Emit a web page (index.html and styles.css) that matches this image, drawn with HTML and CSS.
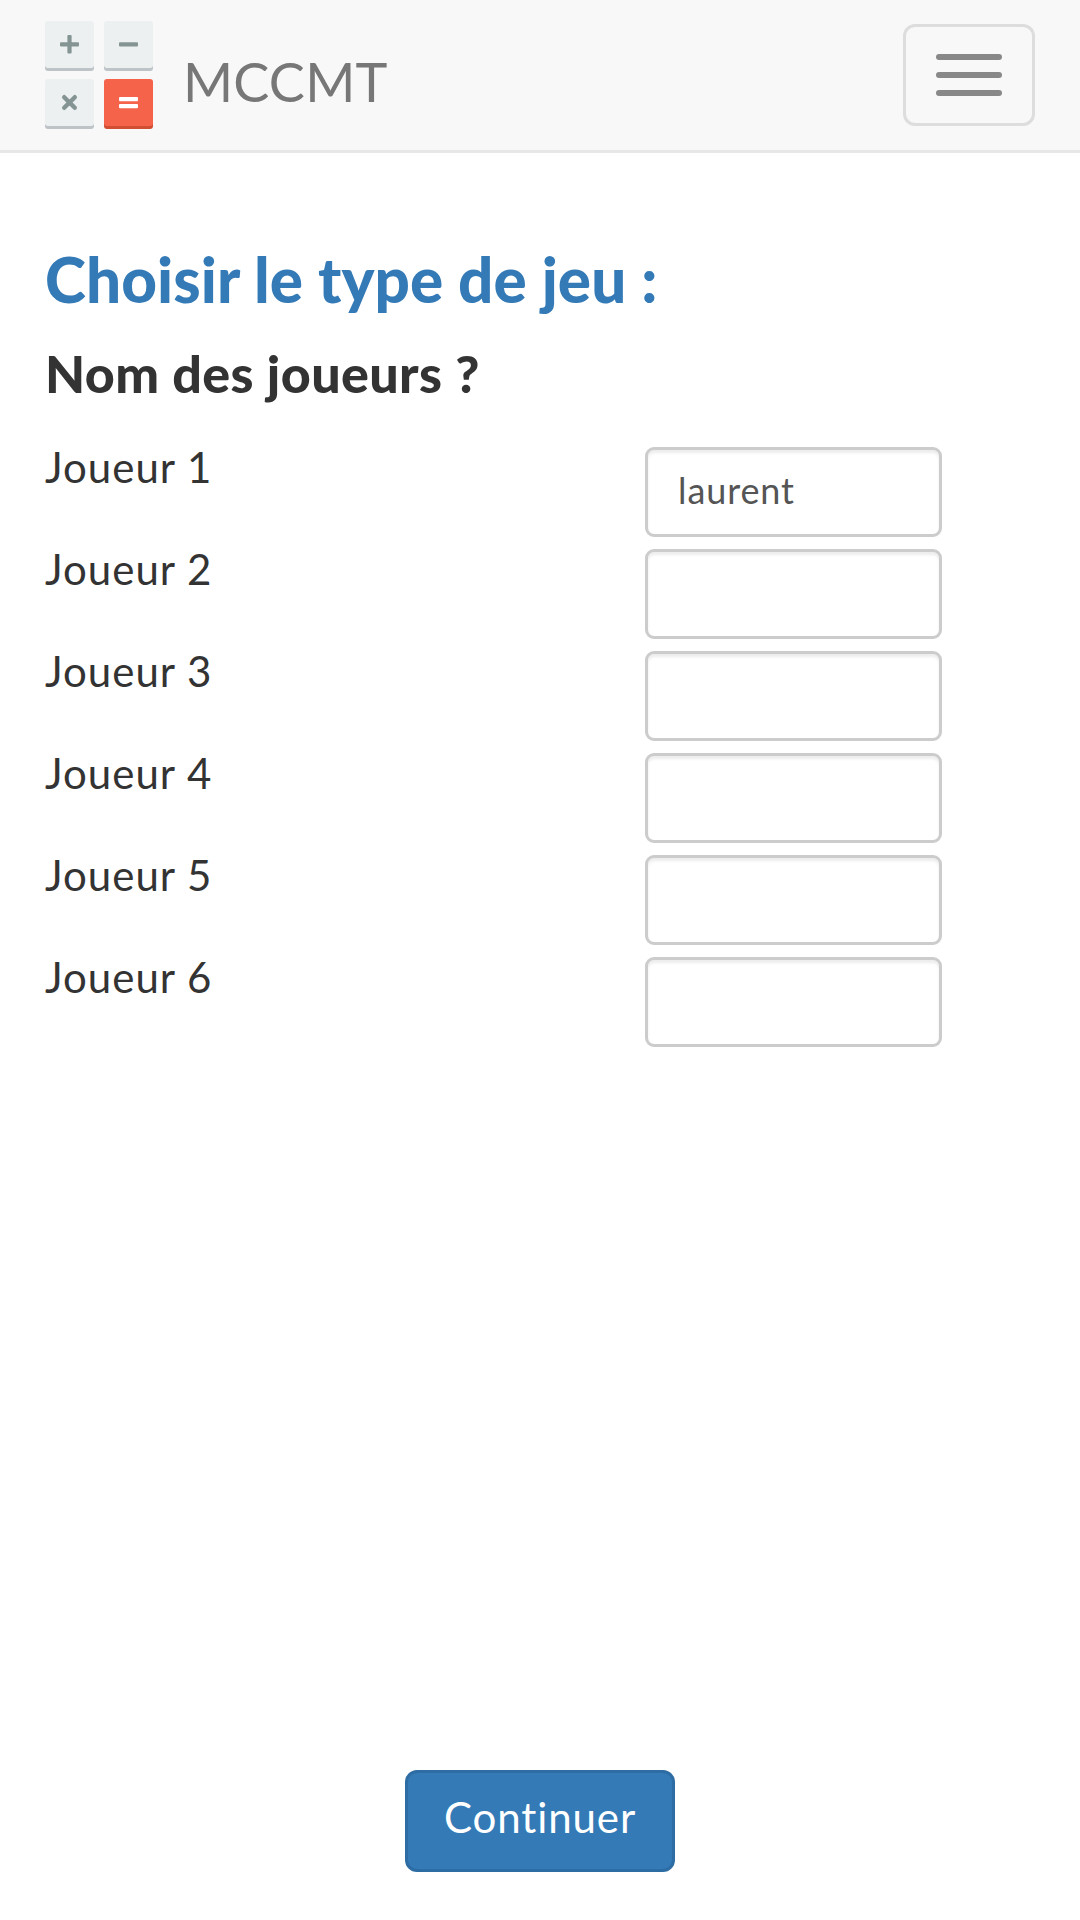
FILE: index.html
```html
<!DOCTYPE html>
<html lang="fr">
	<head>
		<meta charset="UTF-8">
		<title>MCCMT</title>
		<link rel="stylesheet" href="styles.css">
	</head>
	<body>
		<nav class="navbar">
			<a class="brand" href="#">
				<svg class="logo" width="108" height="108" viewBox="0 0 108 108">
					<rect y="6" width="49" height="44" rx="3" fill="#bdc3c7"/>
					<rect width="49" height="47" rx="3" fill="#ecf0f1"/>
					<rect x="59" y="6" width="49" height="44" rx="3" fill="#bdc3c7"/>
					<rect x="59" width="49" height="47" rx="3" fill="#ecf0f1"/>
					<rect y="64" width="49" height="44" rx="3" fill="#bdc3c7"/>
					<rect y="58" width="49" height="47" rx="3" fill="#ecf0f1"/>
					<rect x="59" y="64" width="49" height="44" rx="3" fill="#d14e32"/>
					<rect x="59" y="58" width="49" height="47" rx="3" fill="#f5634a"/>
					<g fill="#849492">
						<rect x="15" y="21.2" width="19" height="4.2" rx="1"/>
						<rect x="22.4" y="14" width="4.2" height="18.4" rx="1"/>
						<rect x="74" y="21.2" width="19" height="4.2" rx="1"/>
					</g>
					<path d="M19.2 76.2L29.8 86.8M29.8 76.2L19.2 86.8" stroke="#849492" stroke-width="4.4" stroke-linecap="round"/>
					<g fill="#fff">
						<rect x="74" y="76" width="19" height="4.3" rx="1"/>
						<rect x="74" y="83" width="19" height="4.3" rx="1"/>
					</g>
				</svg>
				<span class="name">MCCMT</span>
			</a>
			<button type="button" class="toggle">
				<span class="bar"></span>
				<span class="bar"></span>
				<span class="bar"></span>
			</button>
		</nav>
		<div class="container">
			<h1 class="title">Choisir le type de jeu :</h1>
			<h2 class="subtitle">Nom des joueurs ?</h2>
			<div class="row">
				<label for="j1">Joueur 1</label>
				<input type="text" class="field" id="j1" value="laurent">
			</div>
			<div class="row">
				<label for="j2">Joueur 2</label>
				<input type="text" class="field" id="j2">
			</div>
			<div class="row">
				<label for="j3">Joueur 3</label>
				<input type="text" class="field" id="j3">
			</div>
			<div class="row">
				<label for="j4">Joueur 4</label>
				<input type="text" class="field" id="j4">
			</div>
			<div class="row">
				<label for="j5">Joueur 5</label>
				<input type="text" class="field" id="j5">
			</div>
			<div class="row">
				<label for="j6">Joueur 6</label>
				<input type="text" class="field" id="j6">
			</div>
		</div>
		<div class="footer">
			<button type="button" class="btn">Continuer</button>
		</div>
	</body>
</html>
```

FILE: styles.css
```css
*{
	box-sizing: border-box;
}
body{
	display: flex;
	flex-direction: column;
	height: 1920px;
	margin: 0;
	background: #fff;
	color: #333;
	font-family: Lato, "Liberation Sans", sans-serif;
	font-size: 42px;
	line-height: 60px;
}
.navbar{
	display: flex;
	justify-content: space-between;
	align-items: flex-start;
	height: 153px;
	padding: 21px 45px 0;
	background: #f8f8f8;
	border-bottom: 3px solid #e7e7e7;
}
.brand{
	display: flex;
	color: #777;
	font-size: 54px;
	text-decoration: none;
}
.name{
	margin-left: 30px;
	padding-top: 31px;
	letter-spacing: .2px;
}
.toggle{
	display: flex;
	flex-direction: column;
	gap: 12px;
	width: 132px;
	height: 102px;
	margin-top: 3px;
	padding: 27px 30px;
	background: transparent;
	border: 3px solid #ddd;
	border-radius: 12px;
}
.bar{
	width: 66px;
	height: 6px;
	background: #888;
	border-radius: 3px;
}
.container{
	flex: 1;
	padding: 93px 45px 0;
}
.title{
	margin: 0 0 31px;
	color: #337ab7;
	font-size: 62px;
	font-weight: 900;
	line-height: 66px;
	letter-spacing: .08px;
}
.subtitle{
	margin: 0 0 35px;
	font-size: 52px;
	font-weight: 900;
	line-height: 60px;
	letter-spacing: .4px;
}
.row{
	display: flex;
	height: 102px;
}
.row label{
	width: 600px;
	margin-top: -1px;
	letter-spacing: 1px;
}
.field{
	width: 297px;
	height: 90px;
	margin-top: 9px;
	padding: 14px 30px 18px;
	background: #fff;
	border: 3px solid #ccc;
	border-radius: 9px;
	box-shadow: inset 0 3px 3px rgba(0,0,0,.075);
	color: #555;
	font-family: inherit;
	font-size: 36px;
	letter-spacing: .9px;
}
.footer{
	display: flex;
	justify-content: center;
	padding-bottom: 48px;
}
.btn{
	width: 270px;
	height: 102px;
	padding: 12px 0 21px;
	background: #337ab7;
	border: 3px solid #2e6da4;
	border-radius: 12px;
	color: #fff;
	font-family: inherit;
	font-size: 42px;
	line-height: 60px;
	letter-spacing: .9px;
}
```
